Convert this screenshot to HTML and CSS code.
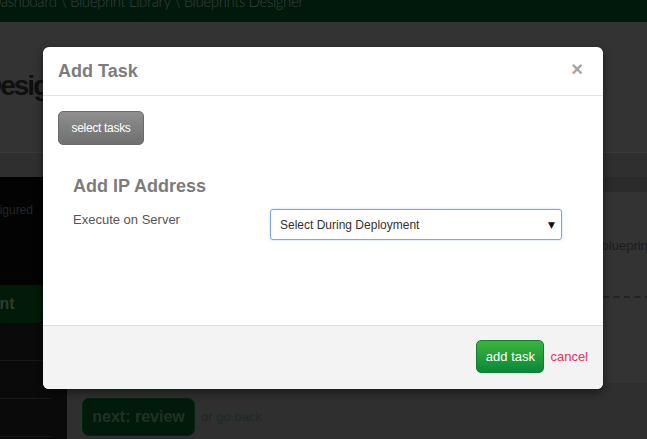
FILE: index.html
```html
<!DOCTYPE html>
<html>
<head>
<meta charset="utf-8">
<link rel="stylesheet" href="styles.css">
</head>
<body>
<div class="page">
  <div class="topbar"><span class="crumbs">Dashboard \ Blueprint Library \ Blueprints Designer</span></div>
  <div class="hero"><h1 class="title">Designer</h1></div>
  <div class="band"></div>
  <div class="main">
    <aside class="sidebar">
      <div class="side-top"><span class="side-note">Not configured</span></div>
      <div class="side-btn"><span class="side-btn-text">Deployment</span></div>
      <div class="side-row"></div>
      <div class="side-row"></div>
      <div class="side-row"></div>
    </aside>
    <section class="content">
      <div class="panel">
        <p class="panel-text">Select a blueprint</p>
        <div class="dash"></div>
      </div>
      <div class="actions">
        <span class="next-btn">next: review</span>
        <span class="goback">or <span class="goback-link">go back</span></span>
      </div>
    </section>
  </div>
</div>

<div class="modal">
  <div class="modal-header">
    <h3 class="modal-title">Add Task</h3>
    <span class="close">×</span>
  </div>
  <div class="modal-body">
    <button class="btn-gray">select tasks</button>
    <div class="task">
      <h3 class="task-title">Add IP Address</h3>
      <div class="field">
        <label class="field-label">Execute on Server</label>
        <div class="select">
          <span class="select-text">Select During Deployment</span>
          <span class="select-arrow">▼</span>
        </div>
      </div>
    </div>
  </div>
  <div class="modal-footer">
    <button class="btn-green">add task</button>
    <a class="cancel">cancel</a>
  </div>
</div>
</body>
</html>
```
FILE: styles.css
```css
* { box-sizing: border-box; }
html, body {
  margin: 0;
  padding: 0;
  width: 647px;
  height: 439px;
  overflow: hidden;
  background: #333333;
  font-family: "Liberation Sans", Arial, sans-serif;
}
.page {
  width: 647px;
  height: 439px;
  display: flex;
  flex-direction: column;
}
.topbar {
  height: 22px;
  background: #00190c;
  overflow: hidden;
  flex: none;
}
.crumbs {
  display: block;
  margin-top: -9px;
  margin-left: -10px;
  font-family: Lato, sans-serif;
  font-weight: 300;
  font-size: 15px;
  letter-spacing: -0.4px;
  line-height: 20px;
  color: #3b3f3d;
  white-space: nowrap;
}
.hero {
  height: 131px;
  flex: none;
  background: #333333;
  border-bottom: 1px solid #3a3a3a;
  overflow: hidden;
}
.title {
  margin: 48px 0 0 -18px;
  font-size: 28px;
  line-height: 32px;
  letter-spacing: -2px;
  font-weight: bold;
  color: #0f0f0f;
  white-space: nowrap;
}
.band {
  height: 24px;
  flex: none;
  background: #2f2f2f;
}
.main {
  flex: 1;
  display: flex;
  min-height: 0;
}
.sidebar {
  width: 67px;
  flex: none;
  background: #0a0a0a;
  display: flex;
  flex-direction: column;
  overflow: hidden;
}
.side-top {
  height: 108px;
  background: #030303;
  padding-top: 26px;
}
.side-note {
  display: block;
  margin-left: -45px;
  font-size: 12px;
  color: #262626;
  white-space: nowrap;
}
.side-btn {
  height: 38px;
  width: 43px;
  background: #021a08;
  border-radius: 0 5px 5px 0;
  overflow: hidden;
  white-space: nowrap;
}
.side-btn-text {
  display: block;
  margin-left: -77px;
  color: #2e3a30;
  font-weight: bold;
  font-size: 16px;
  line-height: 38px;
}
.side-row {
  height: 38px;
  width: 52px;
  border-bottom: 1px solid #171717;
  flex: none;
}
.side-row:first-of-type { height: 30px; }
.content {
  flex: 1;
  background: #2b2b2b;
  padding-top: 15px;
  display: flex;
  flex-direction: column;
}
.panel {
  height: 191px;
  background: #333333;
  padding: 46px 0 0 536px;
  overflow: hidden;
}
.panel-text {
  margin: 0;
  margin-left: -52px;
  font-size: 13px;
  line-height: 16px;
  color: #1c1c1c;
  white-space: nowrap;
}
.dash {
  margin-top: 42px;
  border-top: 2px dashed #232323;
  width: 100%;
}
.actions {
  flex: 1;
  background: #2f2f2f;
  display: flex;
  align-items: flex-start;
  gap: 6px;
  padding: 15px 0 0 15px;
}
.next-btn {
  display: inline-block;
  width: 113px;
  height: 38px;
  background: #021a0a;
  border: 1px solid #042410;
  border-radius: 7px;
  color: #223026;
  font-weight: bold;
  font-size: 16px;
  line-height: 36px;
  text-align: center;
}
.goback {
  font-size: 13px;
  line-height: 38px;
  color: #1c2422;
}
.goback-link { color: #1b2a2a; }

/* modal */
.modal {
  position: absolute;
  left: 43px;
  top: 47px;
  width: 560px;
  height: 342px;
  background: #ffffff;
  border-radius: 6px;
  box-shadow: 0 3px 9px rgba(0, 0, 0, 0.5);
  display: flex;
  flex-direction: column;
  overflow: hidden;
}
.modal-header {
  height: 49px;
  flex: none;
  padding: 15px 15px 0 15px;
  border-bottom: 1px solid #e5e5e5;
  display: flex;
  justify-content: space-between;
  align-items: flex-start;
}
.modal-title {
  margin: 0;
  font-size: 18px;
  line-height: 18px;
  font-weight: bold;
  color: #7c7c7c;
}
.close {
  font-size: 20px;
  font-weight: bold;
  line-height: 14px;
  color: #a4a4a4;
  margin-top: 0px;
  margin-right: 5px;
}
.modal-body {
  flex: 1;
  padding: 15px;
}
.btn-gray {
  display: block;
  width: 86px;
  height: 34px;
  padding: 0;
  border: 1px solid #6a6a6a;
  border-radius: 5px;
  background: linear-gradient(#8f8f8f, #6f6f6f);
  color: #ffffff;
  font-family: "Liberation Sans", Arial, sans-serif;
  font-size: 12px;
  letter-spacing: -0.3px;
}
.task {
  padding: 31px 15px 0 15px;
}
.task-title {
  margin: 0;
  font-size: 18px;
  line-height: 20px;
  font-weight: bold;
  color: #7c7c7c;
}
.field {
  margin-top: 13px;
  display: flex;
  align-items: flex-start;
}
.field-label {
  width: 197px;
  flex: none;
  padding-top: 2px;
  font-size: 13px;
  line-height: 18px;
  color: #555555;
}
.select {
  width: 292px;
  height: 31px;
  border: 1px solid #7ea6e8;
  border-radius: 3px;
  box-shadow: 0 0 2px rgba(82, 140, 236, 0.5);
  display: flex;
  align-items: center;
  justify-content: space-between;
  padding: 0 6px 0 9px;
}
.select-text {
  font-size: 12px;
  color: #333333;
}
.select-arrow {
  font-size: 9px;
  color: #111111;
  font-family: "DejaVu Sans", sans-serif;
}
.modal-footer {
  height: 64px;
  flex: none;
  border-top: 1px solid #dddddd;
  background: #f3f3f3;
  display: flex;
  justify-content: flex-end;
  align-items: flex-start;
  gap: 6px;
  padding: 14px 15px 0 15px;
}
.btn-green {
  width: 68px;
  height: 33px;
  padding: 0;
  border: 1px solid #117c33;
  border-radius: 5px;
  background: linear-gradient(#3cb43a, #08893b);
  color: #ffffff;
  font-family: "Liberation Sans", Arial, sans-serif;
  font-size: 13px;
}
.cancel {
  font-size: 13px;
  line-height: 33px;
  color: #e0365e;
}
```
